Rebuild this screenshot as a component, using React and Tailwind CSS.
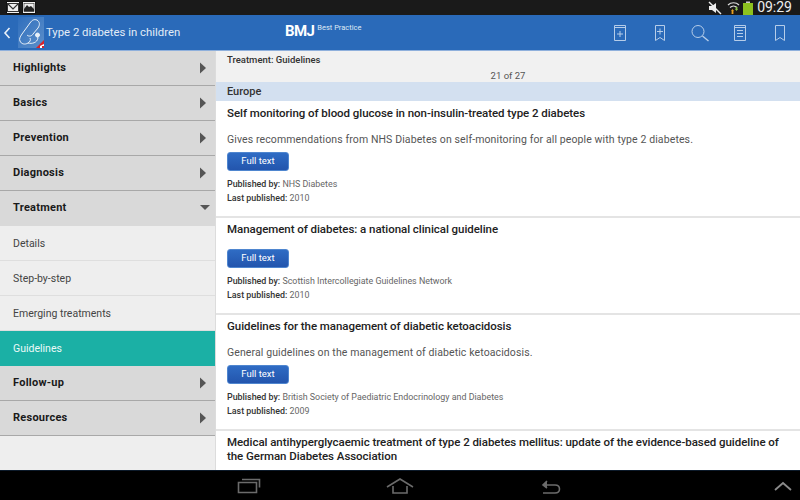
import React from "react";

const Tri = ({ down }) =>
  down ? (
    <svg width="12" height="8" viewBox="0 0 12 8" className="-mt-[3px] -mr-[2px]"><path d="M1 2h10L6 7z" fill="#555" /></svg>
  ) : (
    <svg width="8" height="12" viewBox="0 0 8 12" className="mr-[2px]"><path d="M1 0.5v11L7 6z" fill="#555" /></svg>
  );

const Head = ({ label, open }) => (
  <div className="h-[35px] shrink-0 flex items-center justify-between pl-[13px] pr-[6px] bg-[#d9d9d9] border-b border-[#a8a8a8] text-[11px] font-bold tracking-[0.25px] text-[#1a1a1a]">
    <span>{label}</span>
    <Tri down={open} />
  </div>
);

const Sub = ({ label, active }) => (
  <div className={"h-[35px] shrink-0 flex items-center pl-[13px] pt-[2px] text-[10.5px] border-b " + (active ? "bg-[#1bb0a5] text-[#ecfaf8] border-[#1bb0a5]" : "bg-[#eeeeee] text-[#444] border-[#dedede]")}>
    {label}
  </div>
);

const Card = ({ title, desc, by, year, btnClass, className }) => (
  <div className={"flex flex-col pl-[11px] pr-[16px] border-b-2 border-[#e4e4e4] " + className}>
    <div className="text-[11.5px] font-medium leading-[14px] text-[#222] tracking-[-0.05px]">{title}</div>
    {desc && <div className="mt-[13px] text-[10.5px] leading-[14px] text-[#555] tracking-[0.11px]">{desc}</div>}
    <button className={"w-[62px] h-[19px] rounded-[3px] bg-gradient-to-b from-[#2f6cc4] to-[#2355ad] text-white text-[9.5px] flex items-center justify-center border border-[#4f86cf] " + btnClass}>Full text</button>
    <div className="mt-[6px] text-[8.9px] leading-[14px] text-[#666]"><span className="font-medium text-[#333]">Published by:</span> {by}</div>
    <div className="text-[8.9px] leading-[14px] text-[#666]"><span className="font-medium text-[#333]">Last published:</span> {year}</div>
  </div>
);

const iconProps = { fill: "none", stroke: "#b6cde9", strokeWidth: 1 };

const Stetho = () => (
  <div className="relative w-[26px] h-[31px] bg-gradient-to-br from-[#2f6fbd] to-[#5c8fca] overflow-hidden">
    <svg width="26" height="31" viewBox="0 0 26 31" fill="none" stroke="#e8f0f8" strokeWidth="1">
      <path d="M19 3c-3-1-5 0-7 3L4 17c-2 3-3 5-2 7 1 3 5 4 8 2 2-1 3-3 2-5" />
      <path d="M19 3c3 2 3 5 1 8l-5 6c-1 2-4 3-6 1" />
      <path d="M10 26c4 1 9 0 10-5l-1-2" />
      <circle cx="19.500" cy="18" r="2" fill="#e8f0f8" />
    </svg>
    <svg className="absolute right-0 bottom-0" width="8" height="8" viewBox="0 0 8 8"><path d="M8 0v8H0z" fill="#d8232a" /><path d="M8 4v2H6v2H4V6z" fill="#fff" /></svg>
  </div>
);

export default function App() {
  return (
    <div className="w-[800px] h-[500px] flex flex-col overflow-hidden font-['Roboto',sans-serif] bg-black">
      <div className="h-[15px] shrink-0 bg-[#1a1a1a] flex items-center justify-between pl-[6px] pr-[8px]">
        <div className="flex gap-[2px]">
          <svg width="14" height="13" viewBox="0 0 14 13"><rect x="0.5" y="0.5" width="13" height="12" fill="#f2f2f2" stroke="#111" /><rect x="1.5" y="2.5" width="11" height="8" fill="#eee" stroke="#333" /><path d="M2 3l5 5 5-5" fill="none" stroke="#333" strokeWidth="1.2" /></svg>
          <svg width="14" height="13" viewBox="0 0 14 13"><rect x="0.5" y="0.5" width="13" height="12" fill="#f2f2f2" stroke="#111" /><rect x="2" y="2.5" width="10" height="8" fill="#eee" stroke="#333" strokeWidth="0.6" /><path d="M2 8l3-4 2 2 2-1 3 3v2.5H2z" fill="#222" /></svg>
        </div>
        <div className="flex items-center">
          <svg width="14" height="14" viewBox="0 0 14 14" className="mr-[5px]"><path d="M1 5h3l4-3v10L4 9H1z" fill="#eee" /><path d="M1 1l12 12" stroke="#eee" strokeWidth="1.4" /></svg>
          <svg width="13" height="14" viewBox="0 0 13 14" fill="none" className="mr-[3px]"><path d="M1 4c3-3 8-3 11 0M3 6.500c2-2 5-2 7 0" stroke="#ddd" strokeWidth="1.2" /><path d="M4 10l1.500-2L7 10z" fill="#e8a020" /><path d="M8 8l1.500 2L11 8z" fill="#8bc34a" /><rect x="4.600" y="10" width="1.800" height="3" fill="#e8a020" /><rect x="8.600" y="6" width="1.800" height="2.500" fill="#8bc34a" /></svg>
          <svg width="10" height="14" viewBox="0 0 10 14" className="mr-[4px]"><rect x="3" y="0.500" width="4" height="2" fill="#ccc" /><rect x="0" y="2" width="10" height="12" fill="#8dc21f" /></svg>
          <span className="text-[14px] leading-[15px] text-[#eeeeee]">09:29</span>
        </div>
      </div>

      <div className="h-[35px] shrink-0 bg-[#2a6ab9] relative flex items-center">
        <svg width="8" height="14" viewBox="0 0 8 14" fill="none" className="ml-[3px] mr-[7px]"><path d="M6.500 2L2 7l4.500 5" stroke="#eaf1f9" strokeWidth="1.6" /></svg>
        <Stetho />
        <span className="ml-[2px] text-[11.35px] text-[#e2ecf7]">Type 2 diabetes in children</span>
        <div className="absolute left-[285px] top-[4px] flex items-start text-white">
          <span className="text-[15px] font-bold leading-[24px] tracking-[-0.6px]">BMJ</span>
          <span className="ml-[3px] mt-[1px] text-[7.5px] leading-[15px] text-[#dfe9f5]">Best Practice</span>
        </div>
        <div className="ml-auto flex items-center gap-[18px] pr-[9px]">
          <svg width="22" height="20" viewBox="0 0 22 20" {...iconProps}><path d="M5.500 2.500h11v15h-11zM5.500 4.500h11" /><path d="M11 8v6M8 11h6" /></svg>
          <svg width="22" height="20" viewBox="0 0 22 20" {...iconProps}><path d="M6.500 2.500h9v15l-4.500-3-4.500 3z" /><path d="M11 5.500v6M8 8.500h6" /></svg>
          <svg width="22" height="20" viewBox="0 0 22 20" {...iconProps}><circle cx="9" cy="8.500" r="6" /><path d="M13.500 13l6 5" strokeWidth="1.4" /></svg>
          <svg width="22" height="20" viewBox="0 0 22 20" {...iconProps}><path d="M5.500 2.500h11v15h-11zM5.500 4.500h11M8 7.500h6M8 10.500h6M8 13.500h6" /></svg>
          <svg width="22" height="20" viewBox="0 0 22 20" {...iconProps}><path d="M6.500 2.500h9v15l-4.500-3-4.500 3z" /></svg>
        </div>
      </div>

      <div className="h-[420px] shrink-0 flex border-t border-[#8fb0dc] bg-white overflow-hidden">
        <div className="w-[216px] shrink-0 flex flex-col bg-[#eeeeee] border-r border-[#dcdcdc]">
          <Head label="Highlights" />
          <Head label="Basics" />
          <Head label="Prevention" />
          <Head label="Diagnosis" />
          <div className="h-[35px] shrink-0 flex items-center justify-between pl-[13px] pr-[6px] bg-[#d9d9d9] text-[11px] font-bold tracking-[0.25px] text-[#1a1a1a]">
            <span>Treatment</span>
            <Tri down />
          </div>
          <Sub label="Details" />
          <Sub label="Step-by-step" />
          <Sub label="Emerging treatments" />
          <Sub label="Guidelines" active />
          <Head label="Follow-up" />
          <Head label="Resources" />
        </div>
        <div className="flex-1 min-w-0 flex flex-col overflow-hidden">
          <div className="h-[31px] shrink-0 bg-[#f1f1f1] relative pl-[11px] pt-[3px]">
            <div className="text-[9.5px] leading-[12px] font-medium text-[#333]">Treatment: Guidelines</div>
            <div className="text-center text-[9.5px] leading-[12px] text-[#555] mt-[4px] pr-[11px]">21 of 27</div>
          </div>
          <div className="h-[19px] shrink-0 bg-[#d3e0f0] pl-[11px] pt-[2px] flex items-center text-[11px] font-medium text-[#333]">Europe</div>
          <Card className="h-[117px] shrink-0 pt-[5px]" btnClass="mt-[5px]"
            title="Self monitoring of blood glucose in non-insulin-treated type 2 diabetes"
            desc="Gives recommendations from NHS Diabetes on self-monitoring for all people with type 2 diabetes."
            by="NHS Diabetes" year="2010" />
          <Card className="h-[97px] shrink-0 pt-[4px]" btnClass="mt-[13px]"
            title="Management of diabetes: a national clinical guideline"
            by="Scottish Intercollegiate Guidelines Network" year="2010" />
          <Card className="h-[116px] shrink-0 pt-[4px]" btnClass="mt-[5px]"
            title="Guidelines for the management of diabetic ketoacidosis"
            desc="General guidelines on the management of diabetic ketoacidosis."
            by="British Society of Paediatric Endocrinology and Diabetes" year="2009" />
          <div className="pl-[11px] pr-[16px] pt-[4px] text-[11.5px] font-medium leading-[14px] text-[#222] tracking-[-0.05px]">
            Medical antihyperglycaemic treatment of type 2 diabetes mellitus: update of the evidence-based guideline of the German Diabetes Association
          </div>
        </div>
      </div>

      <div className="h-[30px] shrink-0 bg-black border-t border-[#0c1a2a] relative flex items-center">
        <svg className="ml-[237px]" width="24" height="18" viewBox="0 0 24 18" fill="none" stroke="#6b6b6b" strokeWidth="1.6"><path d="M1.500 5.500h18v10h-18zM5 2.500h17.500v8" /></svg>
        <svg className="ml-[125px]" width="28" height="18" viewBox="0 0 28 18" fill="none" stroke="#6b6b6b" strokeWidth="1.6"><path d="M1 10L14 2l13 8M7 9v7h14V9" /></svg>
        <svg className="ml-[127px]" width="20" height="18" viewBox="0 0 20 18" fill="none" stroke="#6b6b6b" strokeWidth="1.6"><path d="M2 16h12c6 0 6-8 0-8H4" /><path d="M6 4L2 8l4 3" fill="#6b6b6b" /></svg>
        <svg className="ml-[213px]" width="18" height="12" viewBox="0 0 18 12" fill="none" stroke="#8a8a8a" strokeWidth="1.8"><path d="M1 10l8-7 8 7" /></svg>
      </div>
    </div>
  );
}
